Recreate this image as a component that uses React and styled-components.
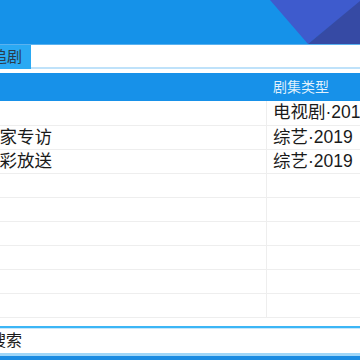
import React from 'react';
import styled, { createGlobalStyle } from 'styled-components';

const GlobalStyle = createGlobalStyle`
  html, body {
    margin: 0;
    padding: 0;
    width: 360px;
    height: 360px;
    overflow: hidden;
    background: #fff;
    font-family: "Liberation Sans", "Noto Sans CJK SC", sans-serif;
  }
`;

const rows = [
  { title: '', type: '电视剧·2019' },
  { title: '独家专访', type: '综艺·2019' },
  { title: '精彩放送', type: '综艺·2019' },
  { title: '', type: '' },
  { title: '', type: '' },
  { title: '', type: '' },
  { title: '', type: '' },
  { title: '', type: '' },
  { title: '', type: '' },
];

const Page = styled.div`
  display: flex;
  flex-direction: column;
  width: 360px;
  height: 360px;
  overflow: hidden;
`;

const Banner = styled.div`
  position: relative;
  height: 44px;
  background: #1592e9;
  border-bottom: 1px solid #5ab2f0;
  overflow: hidden;
`;

const Deco = styled.svg`
  position: absolute;
  right: 0;
  top: 0;
`;

const TabBar = styled.div`
  display: flex;
  align-items: flex-start;
  height: 28px;
`;

const Tab = styled.div`
  height: 24px;
  width: 31px;
  background: #2aa9f3;
  color: #2b3a4a;
  font-size: 15px;
  line-height: 24px;
  white-space: nowrap;
  overflow: hidden;
`;

const TabText = styled.span`
  display: inline-block;
  margin-left: -8px;
`;

const TabFill = styled.div`
  flex: 1;
  height: 22px;
  border-bottom: 2px solid #bfe2fa;
`;

const Grid = styled.div`
  display: grid;
  grid-template-columns: 266px 1fr;
`;

const HeadCell = styled.div`
  height: 28px;
  background: #1791e9;
  color: rgba(255, 255, 255, 0.88);
  font-size: 14px;
  line-height: 28px;
  padding-left: ${p => (p.$first ? '0' : '6px')};
  border-left: ${p => (p.$first ? 'none' : '1px solid #1791e9')};
  white-space: nowrap;
  overflow: hidden;
`;

const Cell = styled.div`
  box-sizing: border-box;
  height: ${p => (p.$tall ? 25 : 24)}px;
  border-bottom: 1px solid #eeeeee;
  border-left: ${p => (p.$first ? 'none' : '1px solid #eeeeee')};
  padding-left: ${p => (p.$first ? '0' : '6px')};
  color: #1a1a1a;
  font-size: 17.5px;
  line-height: 23px;
  white-space: nowrap;
  overflow: hidden;
`;

const CutText = styled.span`
  display: inline-block;
  margin-left: -18px;
`;

const Spacer = styled.div`
  flex: 1;
`;

const Search = styled.div`
  height: 24px;
  border-top: 2px solid #3cb6f6;
  box-shadow: inset 0 1px 0 #c8e8fb;
  border-bottom: 3px solid #9fd6f8;
  padding-top: 1px;
  font-size: 16px;
  line-height: 24px;
  color: #1a1a1a;
  white-space: nowrap;
  overflow: hidden;
`;

const SearchText = styled.span`
  display: inline-block;
  margin-left: -10px;
`;

const Footer = styled.div`
  height: 4px;
  background: #1a8be2;
`;

export default function App() {
  return (
    <Page>
      <GlobalStyle />
      <Banner>
        <Deco width="90" height="44" viewBox="0 0 90 44">
          <polygon points="0,0 90,0 90,2 38,44" fill="#3e5bcd" />
          <polygon points="38,44 90,1 90,44" fill="#364aa4" />
        </Deco>
      </Banner>
      <TabBar>
        <Tab>
          <TabText>追剧</TabText>
        </Tab>
        <TabFill />
      </TabBar>
      <Grid>
        <HeadCell $first />
        <HeadCell>剧集类型</HeadCell>
        {rows.map((r, i) => (
          <React.Fragment key={i}>
            <Cell $first $tall={i === 0}>
              {r.title && <CutText>{r.title}</CutText>}
            </Cell>
            <Cell $tall={i === 0}>{r.type}</Cell>
          </React.Fragment>
        ))}
      </Grid>
      <Spacer />
      <Search>
        <SearchText>搜索</SearchText>
      </Search>
      <Footer />
    </Page>
  );
}
